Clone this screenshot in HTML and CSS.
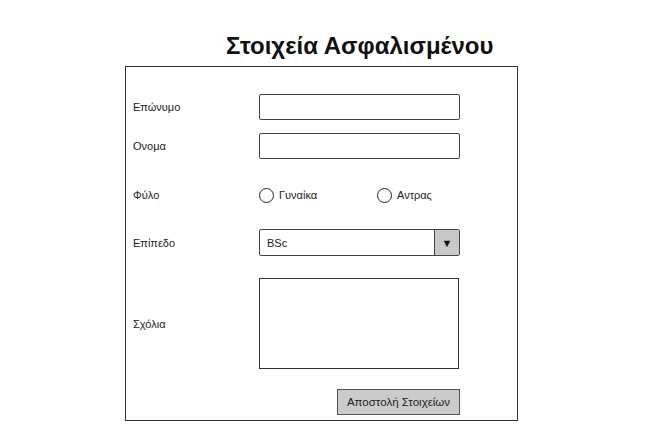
FILE: index.html
```html
<!DOCTYPE html>
<html lang="el">
<head>
<meta charset="utf-8">
<link rel="stylesheet" href="styles.css">
</head>
<body>
<h1 class="title">Στοιχεία Ασφαλισμένου</h1>
<div class="form">
  <div class="row r1">
    <span class="label">Επώνυμο</span>
    <div class="input"></div>
  </div>
  <div class="row r2">
    <span class="label">Ονομα</span>
    <div class="input"></div>
  </div>
  <div class="row r3">
    <span class="label">Φύλο</span>
    <div class="radios">
      <span class="radio"><span class="circle"></span>Γυναίκα</span>
      <span class="radio"><span class="circle"></span>Αντρας</span>
    </div>
  </div>
  <div class="row r4">
    <span class="label">Επίπεδο</span>
    <div class="select"><span class="value">BSc</span><span class="arrow">▼</span></div>
  </div>
  <div class="row r5">
    <span class="label">Σχόλια</span>
    <div class="textarea"></div>
  </div>
  <div class="row r6">
    <span class="label"></span>
    <div class="btnwrap"><span class="button">Αποστολή Στοιχείων</span></div>
  </div>
</div>
</body>
</html>
```
FILE: styles.css
```css
html, body {
  margin: 0;
  padding: 0;
  background: #fff;
}
body {
  font-family: "Liberation Sans", Arial, sans-serif;
  color: #222;
  width: 654px;
  height: 446px;
  overflow: hidden;
}
.title {
  margin: 0;
  padding: 32px 0 0 226px;
  height: 33px;
  font-size: 24px;
  font-weight: bold;
  color: #111;
  line-height: 28px;
  white-space: nowrap;
}
.form {
  margin-left: 125px;
  margin-top: 1px;
  border: 1px solid #333;
  padding-top: 27px;
  box-sizing: border-box;
  height: 355px;
  width: 393px;
}
.row {
  display: flex;
  align-items: center;
  padding-left: 7px;
  font-size: 11px;
}
.label {
  width: 126px;
  flex: none;
  color: #222;
}
.r1 { height: 26px; }
.r2 { height: 26px; margin-top: 13px; }
.r3 { height: 26px; margin-top: 23px; }
.r4 { height: 27px; margin-top: 21px; }
.r5 { height: 91px; margin-top: 22px; }
.r6 { height: 26px; margin-top: 20px; }
.input {
  width: 201px;
  height: 26px;
  box-sizing: border-box;
  border: 1px solid #444;
  border-radius: 2px;
  background: #fff;
}
.radios {
  display: flex;
}
.radio {
  display: flex;
  align-items: center;
  width: 118px;
  font-size: 11px;
}
.circle {
  width: 13px;
  height: 13px;
  border: 1px solid #222;
  border-radius: 50%;
  margin-right: 5px;
  background: #fff;
}
.select {
  width: 201px;
  height: 27px;
  box-sizing: border-box;
  border: 1px solid #444;
  border-radius: 2px;
  display: flex;
  align-items: stretch;
}
.select .value {
  flex: 1;
  display: flex;
  align-items: center;
  padding-left: 7px;
}
.select .arrow {
  width: 24px;
  background: #c8c8c8;
  border-left: 1px solid #444;
  display: flex;
  align-items: center;
  justify-content: center;
  font-size: 11px;
  color: #111;
}
.textarea {
  width: 200px;
  height: 91px;
  box-sizing: border-box;
  border: 1px solid #333;
  background: #fff;
}
.btnwrap {
  width: 201px;
  display: flex;
  justify-content: flex-end;
}
.button {
  width: 123px;
  height: 26px;
  box-sizing: border-box;
  background: #cbcbcb;
  border: 1px solid #555;
  display: flex;
  align-items: center;
  justify-content: center;
  font-size: 11.5px;
  color: #222;
}
```
